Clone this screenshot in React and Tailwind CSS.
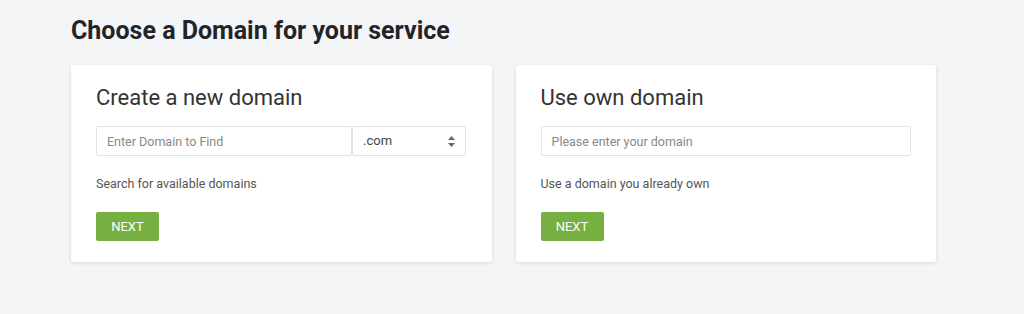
import React from "react";

const Card = ({ title, note, children }) => (
  <div className="bg-white rounded-[3px] shadow-[0_1px_4px_rgba(0,0,0,0.12)] px-[25px] pt-[20px] pb-[21px]">
    <h2 className="text-[22px] leading-[26px] text-[#333] font-normal">{title}</h2>
    <div className="mt-[15px] flex">{children}</div>
    <p className="mt-[20px] text-[12.5px] leading-[16px] text-[#555]">{note}</p>
    <button className="mt-[20px] h-[29px] w-[63px] rounded-[2px] bg-[#76b041] text-white text-[13px]">
      NEXT
    </button>
  </div>
);

export default function App() {
  return (
    <div
      className="min-h-[314px] bg-[#f4f5f7] pl-[71px] pr-[88px] pt-[15px]"
      style={{ fontFamily: "Roboto, 'Liberation Sans', sans-serif" }}
    >
      <h1 className="text-[25px] leading-[32px] font-bold text-[#212529]">
        Choose a Domain for your service
      </h1>
      <div className="mt-[18px] grid grid-cols-2 gap-[24px]">
        <Card title="Create a new domain" note="Search for available domains">
          <input
            placeholder="Enter Domain to Find"
            className="w-[256px] h-[30px] border border-[#e2e2e2] rounded-[2px] px-[10px] text-[12.5px] placeholder:text-[#888] outline-none"
          />
          <div className="w-[114px] h-[30px] border border-[#e2e2e2] rounded-[2px] px-[10px] flex items-center justify-between text-[13px] text-[#444]">
            <span>.com</span>
            <svg width="7" height="11" viewBox="0 0 7 11">
              <path d="M3.5 0L7 4H0z" fill="#666" />
              <path d="M3.5 11L0 7h7z" fill="#666" />
            </svg>
          </div>
        </Card>
        <Card title="Use own domain" note="Use a domain you already own">
          <input
            placeholder="Please enter your domain"
            className="w-full h-[30px] border border-[#e2e2e2] rounded-[2px] px-[10px] text-[12.5px] placeholder:text-[#888] outline-none"
          />
        </Card>
      </div>
    </div>
  );
}
